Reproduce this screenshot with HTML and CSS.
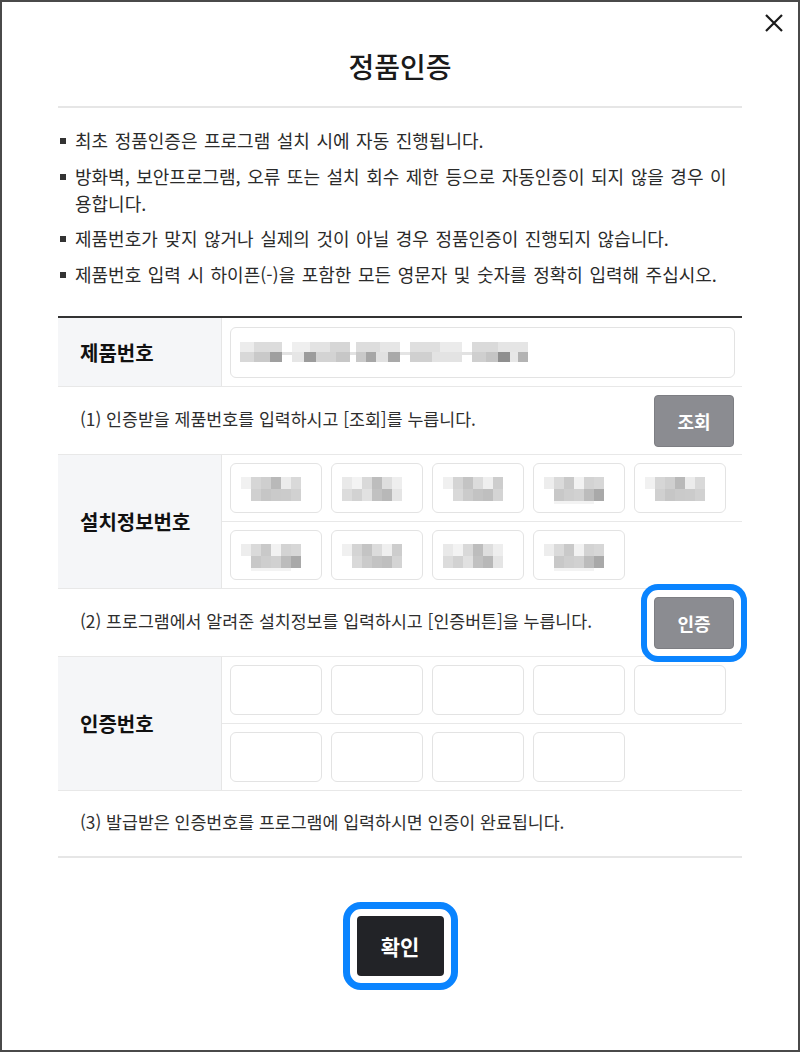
FILE: index.html
```html
<!DOCTYPE html>
<html lang="ko">
<head>
  <meta charset="UTF-8" />
  <meta name="viewport" content="width=device-width, initial-scale=1.0"/>
  <title>정품인증</title>
  <link rel="stylesheet" href="styles.css">
</head>
<body>

  <!-- mosaic patterns for masked serial values -->
  <svg class="defs" width="0" height="0" aria-hidden="true">
    <symbol id="mask-a" viewBox="0 0 70 30">
      <rect x="0" y="3" width="10" height="12" fill="#f1f1f1"/>
      <rect x="10" y="3" width="10" height="12" fill="#d6d6d6"/>
      <rect x="20" y="3" width="10" height="12" fill="#cfcfcf"/>
      <rect x="30" y="3" width="10" height="12" fill="#b9b9b9"/>
      <rect x="40" y="3" width="10" height="12" fill="#ececec"/>
      <rect x="50" y="3" width="10" height="12" fill="#d9d9d9"/>
      <rect x="10" y="15" width="10" height="12" fill="#d0d0d0"/>
      <rect x="20" y="15" width="10" height="12" fill="#c6c6c6"/>
      <rect x="30" y="15" width="10" height="12" fill="#cacaca"/>
      <rect x="40" y="15" width="10" height="12" fill="#cbcbcb"/>
      <rect x="50" y="15" width="10" height="12" fill="#d1d1d1"/>
    </symbol>
    <symbol id="mask-b" viewBox="0 0 70 30">
      <rect x="0" y="3" width="10" height="12" fill="#e9e9e9"/>
      <rect x="10" y="3" width="10" height="12" fill="#f3f3f3"/>
      <rect x="20" y="3" width="10" height="12" fill="#d9d9d9"/>
      <rect x="30" y="3" width="10" height="12" fill="#bdbdbd"/>
      <rect x="40" y="3" width="10" height="12" fill="#dedede"/>
      <rect x="50" y="3" width="10" height="12" fill="#eeeeee"/>
      <rect x="0" y="15" width="10" height="12" fill="#dcdcdc"/>
      <rect x="10" y="15" width="10" height="12" fill="#d2d2d2"/>
      <rect x="20" y="15" width="10" height="12" fill="#e1e1e1"/>
      <rect x="30" y="15" width="10" height="12" fill="#c1c1c1"/>
      <rect x="40" y="15" width="10" height="12" fill="#b8b8b8"/>
      <rect x="50" y="15" width="10" height="12" fill="#e5e5e5"/>
    </symbol>
    <symbol id="mask-c" viewBox="0 0 70 30">
      <rect x="0" y="3" width="10" height="12" fill="#ededed"/>
      <rect x="10" y="3" width="10" height="12" fill="#dadada"/>
      <rect x="20" y="3" width="10" height="12" fill="#c9c9c9"/>
      <rect x="30" y="3" width="10" height="12" fill="#f2f2f2"/>
      <rect x="40" y="3" width="10" height="12" fill="#d3d3d3"/>
      <rect x="50" y="3" width="10" height="12" fill="#d7d7d7"/>
      <rect x="10" y="15" width="10" height="12" fill="#c8c8c8"/>
      <rect x="20" y="15" width="10" height="12" fill="#cecece"/>
      <rect x="30" y="15" width="10" height="12" fill="#d1d1d1"/>
      <rect x="40" y="15" width="10" height="12" fill="#bcbcbc"/>
      <rect x="50" y="15" width="10" height="12" fill="#a9a9a9"/>
      <rect x="10" y="27" width="40" height="3" fill="#f3f3f3"/>
    </symbol>
    <symbol id="mask-d" viewBox="0 0 70 30">
      <rect x="0" y="3" width="10" height="12" fill="#f0f0f0"/>
      <rect x="10" y="3" width="10" height="12" fill="#d4d4d4"/>
      <rect x="20" y="3" width="10" height="12" fill="#c4c4c4"/>
      <rect x="30" y="3" width="10" height="12" fill="#dcdcdc"/>
      <rect x="40" y="3" width="10" height="12" fill="#efefef"/>
      <rect x="50" y="3" width="10" height="12" fill="#cdcdcd"/>
      <rect x="10" y="15" width="10" height="12" fill="#d9d9d9"/>
      <rect x="20" y="15" width="10" height="12" fill="#cbcbcb"/>
      <rect x="30" y="15" width="10" height="12" fill="#c3c3c3"/>
      <rect x="40" y="15" width="10" height="12" fill="#bfbfbf"/>
      <rect x="50" y="15" width="10" height="12" fill="#d4d4d4"/>
    </symbol>
    <symbol id="mask-serial" viewBox="0 0 290 30">
      <rect x="0" y="4" width="14" height="10" fill="#ececec"/>
      <rect x="14" y="4" width="28" height="10" fill="#dcdcdc"/>
      <rect x="0" y="14" width="14" height="10" fill="#d8d8d8"/>
      <rect x="14" y="14" width="16" height="10" fill="#c9c9c9"/>
      <rect x="30" y="14" width="12" height="10" fill="#9f9f9f"/>
      <rect x="42" y="14" width="10" height="3" fill="#e2e2e2"/>
      <rect x="52" y="4" width="18" height="10" fill="#efefef"/>
      <rect x="70" y="4" width="20" height="10" fill="#e3e3e3"/>
      <rect x="90" y="4" width="20" height="10" fill="#d6d6d6"/>
      <rect x="52" y="14" width="12" height="10" fill="#e6e6e6"/>
      <rect x="64" y="14" width="12" height="10" fill="#9c9c9c"/>
      <rect x="76" y="14" width="20" height="10" fill="#d3d3d3"/>
      <rect x="96" y="14" width="14" height="10" fill="#c7c7c7"/>
      <rect x="110" y="14" width="6" height="3" fill="#e2e2e2"/>
      <rect x="116" y="4" width="24" height="10" fill="#dddddd"/>
      <rect x="140" y="4" width="20" height="10" fill="#e6e6e6"/>
      <rect x="116" y="14" width="10" height="10" fill="#c9c9c9"/>
      <rect x="126" y="14" width="10" height="10" fill="#a6a6a6"/>
      <rect x="136" y="14" width="12" height="10" fill="#e1e1e1"/>
      <rect x="148" y="14" width="12" height="10" fill="#a9a9a9"/>
      <rect x="160" y="14" width="10" height="3" fill="#e4e4e4"/>
      <rect x="170" y="4" width="30" height="10" fill="#dfdfdf"/>
      <rect x="200" y="4" width="22" height="10" fill="#ebebeb"/>
      <rect x="170" y="14" width="22" height="10" fill="#d0d0d0"/>
      <rect x="192" y="14" width="30" height="10" fill="#e3e3e3"/>
      <rect x="222" y="14" width="10" height="3" fill="#e2e2e2"/>
      <rect x="232" y="4" width="26" height="10" fill="#dadada"/>
      <rect x="258" y="4" width="30" height="10" fill="#e5e5e5"/>
      <rect x="232" y="14" width="14" height="10" fill="#cfcfcf"/>
      <rect x="246" y="14" width="12" height="10" fill="#c5c5c5"/>
      <rect x="258" y="14" width="12" height="10" fill="#8f8f8f"/>
      <rect x="270" y="14" width="8" height="10" fill="#e7e7e7"/>
      <rect x="278" y="14" width="10" height="10" fill="#b3b3b3"/>
    </symbol>
  </svg>

  <div class="modal">
    <button class="modal-close" type="button" aria-label="닫기">
      <svg width="20" height="20" viewBox="0 0 20 20">
        <path d="M2 2 L18 18 M18 2 L2 18" stroke="#1a1a1a" stroke-width="2.2" fill="none"/>
      </svg>
    </button>

    <!-- Header -->
    <div class="modal-header">
      <h1 class="modal-title">정품인증</h1>
    </div>

    <!-- Notice -->
    <ul class="notice-list">
      <li>최초 정품인증은 프로그램 설치 시에 자동 진행됩니다.</li>
      <li>방화벽, 보안프로그램, 오류 또는 설치 회수 제한 등으로 자동인증이 되지 않을 경우 이용합니다.</li>
      <li>제품번호가 맞지 않거나 실제의 것이 아닐 경우 정품인증이 진행되지 않습니다.</li>
      <li>제품번호 입력 시 하이픈(-)을 포함한 모든 영문자 및 숫자를 정확히 입력해 주십시오.</li>
    </ul>

    <!-- Auth form -->
    <div class="auth-table">
      <div class="auth-row">
        <div class="auth-label">제품번호</div>
        <div class="auth-field">
          <div class="field-line field-line--single">
            <div class="input-box input-box--wide">
              <svg class="mask mask--serial"><use href="#mask-serial"/></svg>
            </div>
          </div>
        </div>
      </div>

      <div class="help-row">
        <p class="help-text">(1) 인증받을 제품번호를 입력하시고 [조회]를 누릅니다.</p>
        <button class="gray-button" type="button">조회</button>
      </div>

      <div class="auth-row">
        <div class="auth-label">설치정보번호</div>
        <div class="auth-field">
          <div class="field-line">
            <div class="input-box"><svg class="mask"><use href="#mask-a"/></svg></div>
            <div class="input-box"><svg class="mask"><use href="#mask-b"/></svg></div>
            <div class="input-box"><svg class="mask"><use href="#mask-d"/></svg></div>
            <div class="input-box"><svg class="mask"><use href="#mask-c"/></svg></div>
            <div class="input-box"><svg class="mask"><use href="#mask-a"/></svg></div>
          </div>
          <div class="field-line">
            <div class="input-box"><svg class="mask"><use href="#mask-c"/></svg></div>
            <div class="input-box"><svg class="mask"><use href="#mask-d"/></svg></div>
            <div class="input-box"><svg class="mask"><use href="#mask-b"/></svg></div>
            <div class="input-box"><svg class="mask"><use href="#mask-c"/></svg></div>
          </div>
        </div>
      </div>

      <div class="help-row">
        <p class="help-text">(2) 프로그램에서 알려준 설치정보를 입력하시고 [인증버튼]을 누릅니다.</p>
        <button class="gray-button is-marked" type="button">인증</button>
      </div>

      <div class="auth-row">
        <div class="auth-label">인증번호</div>
        <div class="auth-field">
          <div class="field-line">
            <div class="input-box"></div>
            <div class="input-box"></div>
            <div class="input-box"></div>
            <div class="input-box"></div>
            <div class="input-box"></div>
          </div>
          <div class="field-line">
            <div class="input-box"></div>
            <div class="input-box"></div>
            <div class="input-box"></div>
            <div class="input-box"></div>
          </div>
        </div>
      </div>

      <div class="help-row help-row--last">
        <p class="help-text">(3) 발급받은 인증번호를 프로그램에 입력하시면 인증이 완료됩니다.</p>
      </div>
    </div>

    <div class="modal-footer">
      <button class="confirm-button is-marked" type="button">확인</button>
    </div>
  </div>

</body>
</html>
```

FILE: styles.css
```css
body {
  margin: 0;
  font-family: "Noto Sans CJK KR", "Noto Sans", sans-serif;
  background-color: #ffffff;
  color: #333;
}

.defs {
  position: absolute;
  width: 0;
  height: 0;
}

.modal {
  position: relative;
  box-sizing: border-box;
  width: 800px;
  height: 1052px;
  border: 2px solid #4a4a4a;
  padding: 46px 56px 0;
  background-color: #fff;
}

.modal-close {
  position: absolute;
  top: 11px;
  right: 14px;
  padding: 0;
  border: none;
  background: transparent;
  cursor: pointer;
  line-height: 0;
}

/* Header */
.modal-header {
  padding-bottom: 22px;
  border-bottom: 2px solid #e6e6e6;
}

.modal-title {
  margin: 0;
  text-align: center;
  font-size: 28px;
  line-height: 36px;
  font-weight: 500;
  color: #1a1a1a;
}

/* Notice */
.notice-list {
  list-style: none;
  margin: 0;
  padding: 19px 8px 0 0;
}

.notice-list li {
  position: relative;
  padding-left: 17px;
  font-size: 18px;
  line-height: 27px;
  word-spacing: 1.5px;
  color: #2b2b2b;
}

.notice-list li + li {
  margin-top: 8.5px;
}

.notice-list li::before {
  content: "";
  position: absolute;
  left: 2px;
  top: 11px;
  width: 6px;
  height: 6px;
  background-color: #333;
}

/* Auth form */
.auth-table {
  margin-top: 28.5px;
  border-top: 2px solid #333;
  border-bottom: 2px solid #e6e6e6;
}

.auth-row {
  display: flex;
  border-bottom: 1px solid #e8e8e8;
}

.auth-label {
  display: flex;
  align-items: center;
  box-sizing: border-box;
  width: 164px;
  padding-left: 22px;
  background-color: #f5f6f8;
  border-right: 1px solid #e6e6e6;
  font-size: 20px;
  font-weight: 700;
  color: #111;
}

.auth-field {
  flex: 1;
}

.field-line {
  display: flex;
  gap: 9px;
  padding: 8px 7px 8px 8px;
}

.field-line + .field-line {
  border-top: 1px solid #e8e8e8;
}

.field-line--single {
  padding-top: 9px;
}

.input-box {
  box-sizing: border-box;
  width: 92px;
  height: 50px;
  padding: 10px 0 0 10px;
  border: 1px solid #e3e3e3;
  border-radius: 6px;
  background-color: #fff;
}

.input-box--wide {
  flex: 1;
  height: 51px;
  padding: 10px 0 0 9px;
}

.mask {
  display: block;
  width: 70px;
  height: 30px;
}

.mask--serial {
  width: 290px;
}

.help-row {
  display: flex;
  align-items: center;
  justify-content: space-between;
  height: 67px;
  padding: 0 8px 0 22px;
  border-bottom: 1px solid #e8e8e8;
}

.help-row--last {
  height: 65px;
  border-bottom: none;
}

.help-text {
  margin: 0 0 4px;
  font-size: 17.3px;
  color: #2e2e2e;
}

.gray-button {
  width: 80px;
  height: 52px;
  border: 1px solid #7d7e83;
  border-radius: 4px;
  background-color: #8b8c91;
  color: #fff;
  font-family: inherit;
  font-size: 18px;
  font-weight: 700;
  cursor: pointer;
}

.is-marked {
  outline: 6px solid #0a84ff;
  outline-offset: 7px;
}

/* Footer */
.modal-footer {
  display: flex;
  justify-content: center;
  padding-top: 58px;
}

.confirm-button {
  width: 87px;
  height: 60px;
  border: none;
  border-radius: 4px;
  background-color: #222327;
  color: #fff;
  font-family: inherit;
  font-size: 21px;
  font-weight: 700;
  cursor: pointer;
}

.confirm-button.is-marked {
  outline-width: 7px;
  outline-offset: 7px;
}
```
